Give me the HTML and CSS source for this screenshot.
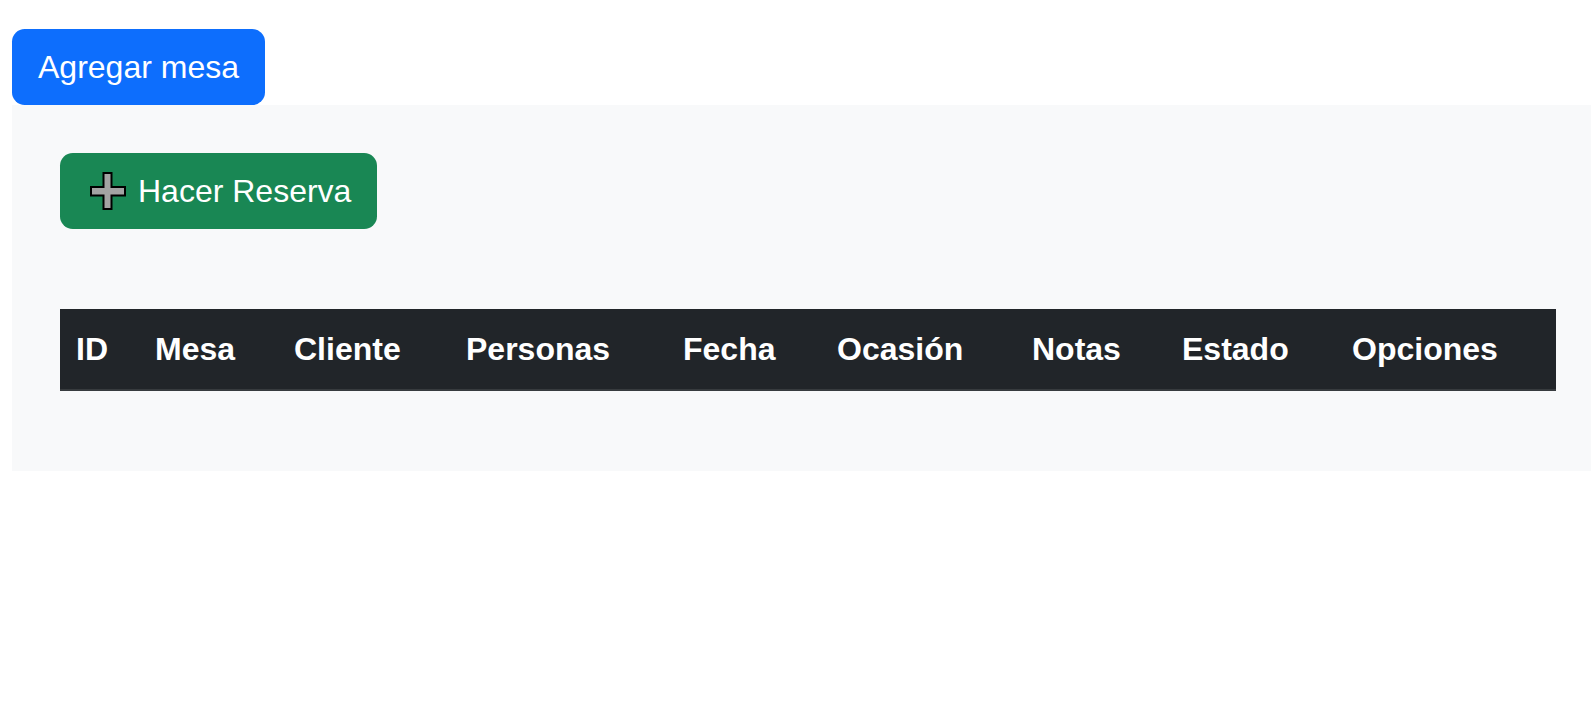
FILE: index.html
```html
<!DOCTYPE html>
<html lang="es">
<head>
<meta charset="utf-8">
<title>Reservas</title>
<link rel="stylesheet" href="styles.css">
</head>
<body>
  <button class="btn btn-primary">Agregar mesa</button>
  <section class="panel">
    <button class="btn btn-success">
      <svg class="plus-icon" viewBox="0 0 36 38" width="36" height="38" aria-hidden="true">
        <path d="M13.5 1 H21.5 V15 H35 V23.5 H21.5 V37 H13.5 V23.5 H1 V15 H13.5 Z" fill="#a3a3a3" stroke="#000" stroke-width="2" stroke-linejoin="miter"/>
      </svg>
      <span>Hacer Reserva</span>
    </button>
    <table class="table">
      <thead>
        <tr>
          <th class="c-id">ID</th>
          <th class="c-mesa">Mesa</th>
          <th class="c-cliente">Cliente</th>
          <th class="c-personas">Personas</th>
          <th class="c-fecha">Fecha</th>
          <th class="c-ocasion">Ocasión</th>
          <th class="c-notas">Notas</th>
          <th class="c-estado">Estado</th>
          <th class="c-opciones">Opciones</th>
        </tr>
      </thead>
      <tbody></tbody>
    </table>
  </section>
</body>
</html>
```
FILE: styles.css
```css
*, *::before, *::after {
  box-sizing: border-box;
}

html, body {
  margin: 0;
  padding: 0;
  background: #ffffff;
  overflow-x: hidden;
}

body {
  padding: 29px 0 0 12px;
  font-family: "Liberation Sans", Arial, sans-serif;
  font-size: 32px;
  line-height: 48px;
  color: #212529;
}

.btn {
  display: inline-flex;
  align-items: center;
  border: none;
  border-radius: 12.8px;
  padding: 14px 27px;
  font-family: "Liberation Sans", Arial, sans-serif;
  font-size: 32px;
  line-height: 48px;
  color: #ffffff;
  white-space: nowrap;
  cursor: pointer;
}

.btn-primary {
  background: #0d6efd;
  padding: 14px 26px;
}

.btn-success {
  background: #198754;
  padding: 14px 26px 14px 30px;
}

.plus-icon {
  width: 36px;
  height: 38px;
  margin-right: 12px;
  flex: none;
}

.panel {
  display: block;
  background: #f8f9fa;
  padding: 48px 35px 80px 48px;
}

.table {
  width: 100%;
  margin-top: 80px;
  border-collapse: collapse;
  table-layout: fixed;
}

.table th {
  background: #212529;
  color: #ffffff;
  font-weight: bold;
  text-align: left;
  padding: 16px 0 16px 16px;
  font-size: 32px;
  line-height: 48px;
  border-bottom: 2px solid #373b3e;
  white-space: nowrap;
}

.c-id { width: 79px; }
.c-mesa { width: 139px; }
.c-cliente { width: 172px; }
.c-personas { width: 217px; }
.c-fecha { width: 154px; }
.c-ocasion { width: 195px; }
.c-notas { width: 150px; }
.c-estado { width: 170px; }
.c-opciones { width: auto; }
```
